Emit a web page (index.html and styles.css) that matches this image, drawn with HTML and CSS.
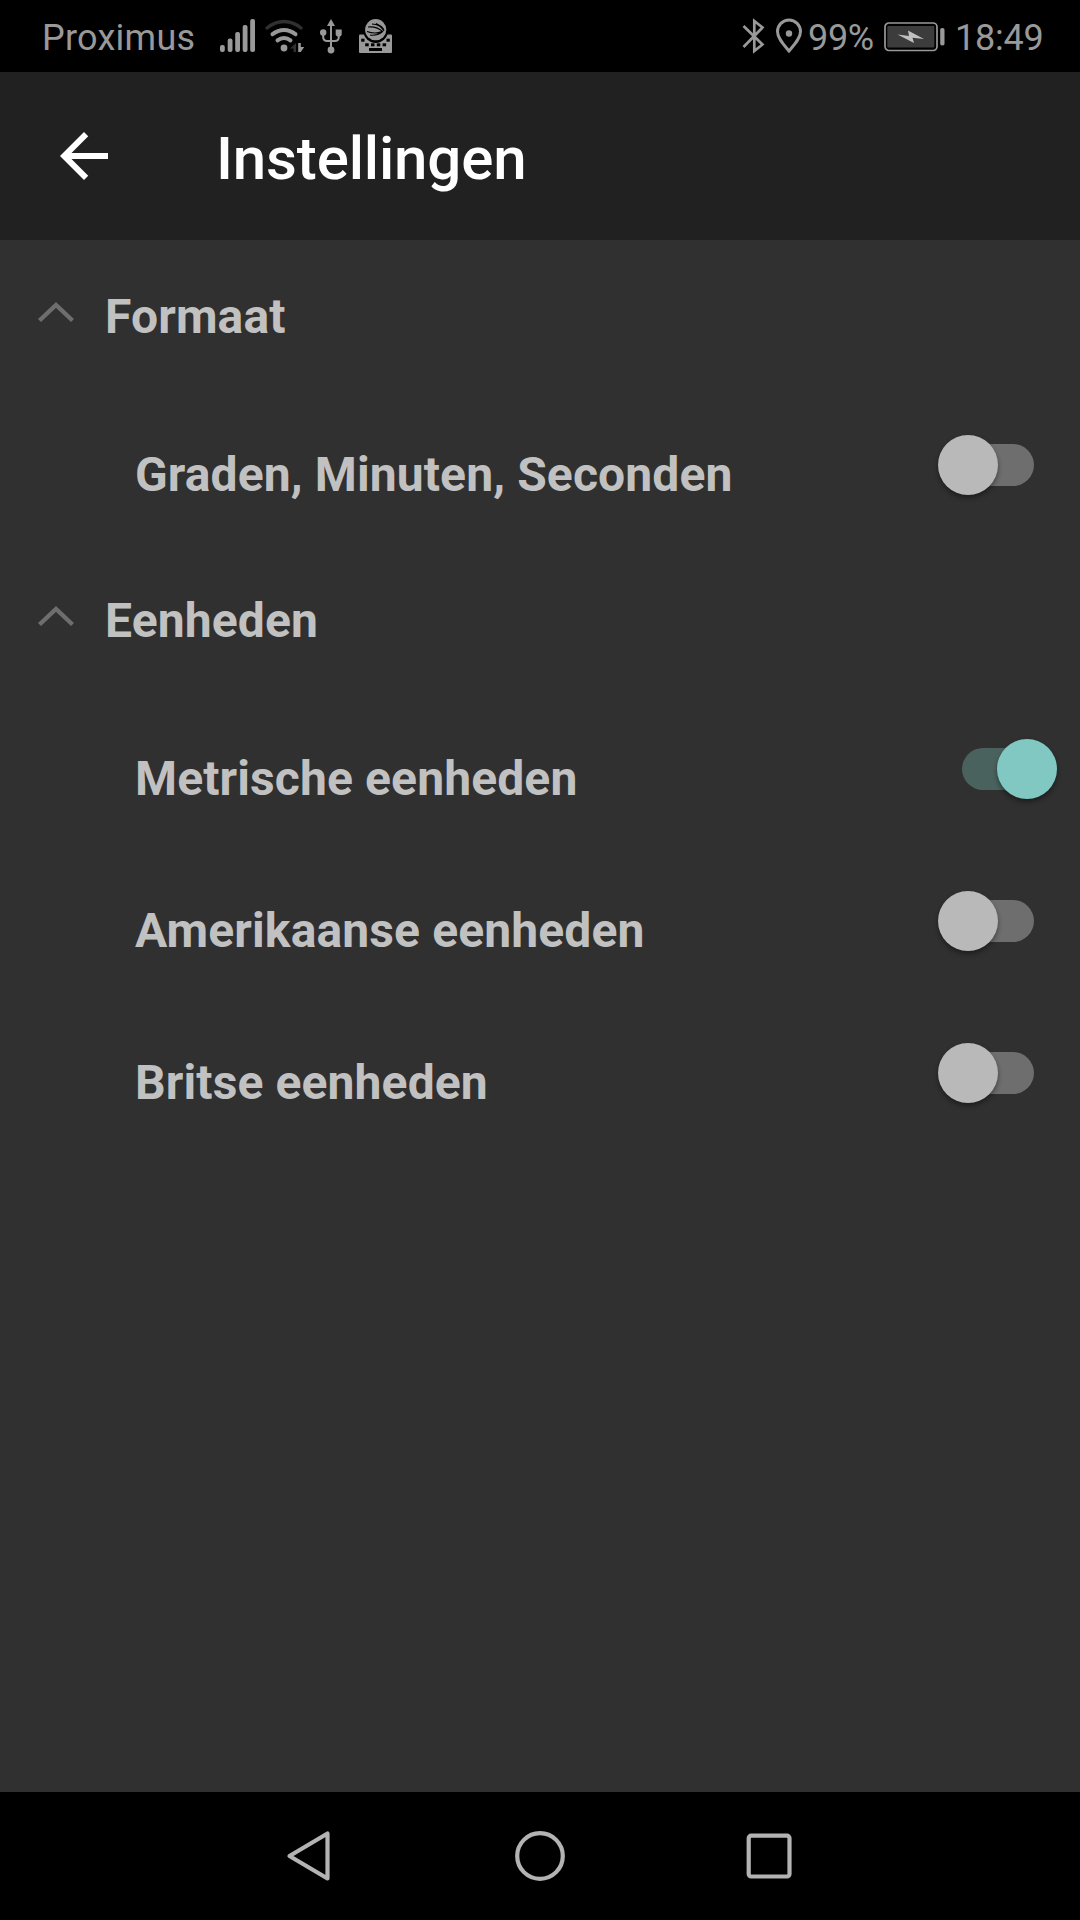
FILE: index.html
```html
<!DOCTYPE html>
<html lang="nl">
<head>
    <meta charset="UTF-8">
    <meta name="viewport" content="width=device-width, initial-scale=1.0">
    <title>Instellingen</title>
    <link rel="stylesheet" href="styles.css">
</head>
<body>
    <div class="screen">
        <!-- Status bar -->
        <div class="status-bar">
            <div class="status-left">
                <span class="carrier">Proximus</span>
                <svg class="icon-signal" width="36" height="36" viewBox="0 0 36 36" fill="currentColor">
                    <rect x="0" y="27" width="4.8" height="7" rx="2"/>
                    <rect x="7.7" y="20.5" width="4.8" height="13.5" rx="2"/>
                    <rect x="15.2" y="14" width="4.8" height="20" rx="2"/>
                    <rect x="22.7" y="7" width="4.8" height="27" rx="2"/>
                    <rect x="30.2" y="1" width="4.8" height="33" rx="2"/>
                </svg>
                <svg class="icon-wifi" width="42" height="36" viewBox="0 0 42 36" fill="none" stroke="currentColor" stroke-linecap="round">
                    <path d="M3 10Q11 3.5 20 3.5T37 10" stroke="#303030" stroke-width="3.4"/>
                    <path d="M8.5 16.2Q14 12 20 12T31.5 16.2" stroke-width="4"/>
                    <path d="M13.5 22.3Q16.5 20 20 20T26.5 22.3" stroke-width="4"/>
                    <circle cx="20" cy="30" r="3.4" fill="currentColor" stroke="none"/>
                    <path d="M26 30.5L32 25v9h-2.5v-3.5z" fill="#303030" stroke="none"/>
                    <path d="M34.2 25v9h2.6l3.4-5h-3.4v-4z" fill="currentColor" stroke="none"/>
                </svg>
                <svg class="icon-usb" width="24" height="36" viewBox="0 0 24 36" fill="none" stroke="currentColor" stroke-width="2">
                    <path d="M12 6v27M4.2 14v5q0 4 4 4h7.6q4 0 4-4v-5"/>
                    <path d="M12 1l4 7H8zM16.7 11.5h6V17l-1.5 1.5h-3L16.7 17z" fill="currentColor" stroke="none"/>
                    <circle cx="4.2" cy="14.5" r="3.2" fill="currentColor" stroke="none"/>
                    <circle cx="12" cy="32" r="3.4" fill="currentColor" stroke="none"/>
                </svg>
                <svg class="icon-keyboard" width="34" height="36" viewBox="0 0 34 36">
                    <rect x="0" y="16.5" width="33" height="18.5" rx="1" fill="currentColor"/>
                    <g fill="#000">
                        <circle cx="16.7" cy="12.5" r="12.4"/>
                        <rect x="2.2" y="20.7" width="3.3" height="3"/>
                        <rect x="27.5" y="20.7" width="3.3" height="3"/>
                        <rect x="6.2" y="25.3" width="3.5" height="3"/>
                        <rect x="12" y="25.3" width="3.5" height="3"/>
                        <rect x="17.8" y="25.3" width="3.5" height="3"/>
                        <rect x="23.6" y="25.3" width="3.5" height="3"/>
                        <rect x="10" y="30" width="13" height="3"/>
                    </g>
                    <circle cx="16.7" cy="11.7" r="10.6" fill="currentColor"/>
                    <path d="M13 6q8 0 12 7M17 5.5q5 2 8 6M9 9q9-1 15 5M8 13.5q8 3 15 0M11 17q7 1 12-3" fill="none" stroke="#000" stroke-width="1.1"/>
                </svg>
            </div>
            <div class="status-right">
                <svg class="icon-bluetooth" width="24" height="36" viewBox="0 0 24 36" fill="none" stroke="currentColor" stroke-width="2.7">
                    <path d="M1.5 8l19 18.5-8.2 6.5V3l8.2 6.5L1.5 29"/>
                </svg>
                <svg class="icon-location" width="28" height="36" viewBox="0 0 28 36" fill="none" stroke="currentColor" stroke-width="3">
                    <path d="M14 33C9 27 2.5 20.5 2.5 13.5a11.5 11.5 0 0 1 23 0C25.5 20.5 19 27 14 33z"/>
                    <circle cx="14" cy="15.5" r="3.2" fill="currentColor" stroke="none"/>
                </svg>
                <span class="battery-level">99%</span>
                <svg class="icon-battery" width="62" height="30" viewBox="0 0 62 30">
                    <rect x="1" y="1" width="52" height="27.5" rx="4" fill="none" stroke="currentColor" stroke-width="1.7"/>
                    <rect x="3.3" y="4" width="47" height="21.5" rx="1" fill="#3c3c3c"/>
                    <rect x="56.2" y="6" width="4.3" height="17.5" rx="1.8" fill="currentColor"/>
                    <path d="M13.5 12.5L25 14l-1-5.500L40 17l-11.500-1.300L30 21z" fill="#c0c0c0"/>
                </svg>
                <span class="clock">18:49</span>
            </div>
        </div>

        <!-- Title bar -->
        <header class="toolbar">
            <svg class="back" width="72" height="72" viewBox="0 0 24 24" fill="#fff">
                <path d="M20 11H7.83l5.59-5.59L12 4l-8 8 8 8 1.41-1.41L7.83 13H20v-2z"/>
            </svg>
            <h1 class="title">Instellingen</h1>
        </header>

        <main class="settings">
            <div class="group-header">
                <svg class="chevron" width="36" height="22" viewBox="0 0 36 22" fill="none" stroke="currentColor" stroke-width="4.4">
                    <path d="M1.5 19.5L18 4l16.5 15.5"/>
                </svg>
                <span>Formaat</span>
            </div>
            <div class="setting">
                <span>Graden, Minuten, Seconden</span>
                <div class="switch"></div>
            </div>

            <div class="group-header">
                <svg class="chevron" width="36" height="22" viewBox="0 0 36 22" fill="none" stroke="currentColor" stroke-width="4.4">
                    <path d="M1.5 19.5L18 4l16.5 15.5"/>
                </svg>
                <span>Eenheden</span>
            </div>
            <div class="setting">
                <span>Metrische eenheden</span>
                <div class="switch on"></div>
            </div>
            <div class="setting">
                <span>Amerikaanse eenheden</span>
                <div class="switch"></div>
            </div>
            <div class="setting">
                <span>Britse eenheden</span>
                <div class="switch"></div>
            </div>
        </main>

        <!-- Navigation buttons -->
        <nav class="nav-bar">
            <svg width="52" height="52" viewBox="0 0 52 52" fill="none" stroke="currentColor" stroke-width="4.2" stroke-linejoin="round">
                <path d="M42.5 3.5v45L4.500 26z"/>
            </svg>
            <svg width="52" height="52" viewBox="0 0 52 52" fill="none" stroke="currentColor" stroke-width="4.2">
                <circle cx="26" cy="26" r="22.8"/>
            </svg>
            <svg width="52" height="52" viewBox="0 0 52 52" fill="none" stroke="currentColor" stroke-width="4.2">
                <rect x="5.7" y="5.7" width="40.8" height="40.8" rx="2.5"/>
            </svg>
        </nav>
    </div>
</body>
</html>
```
FILE: styles.css
```css
* {
    margin: 0;
    padding: 0;
    box-sizing: border-box;
}

body {
    font-family: Roboto, sans-serif;
    background: #303030;
    overflow: hidden;
}

svg {
    display: block;
    flex: none;
}

.screen {
    width: 1080px;
    height: 1920px;
    display: flex;
    flex-direction: column;
}

/* Status bar */
.status-bar {
    height: 72px;
    padding: 0 37px 0 42px;
    background: #000;
    color: #999;
    font-size: 36px;
    line-height: 42px;
    display: flex;
    justify-content: space-between;
}

.status-left,
.status-right {
    display: flex;
    align-items: flex-start;
    padding-top: 18px;
}

.carrier,
.battery-level,
.clock {
    margin-top: -1px;
    white-space: nowrap;
}

.carrier {
    width: 178px;
    letter-spacing: 0.25px;
}

.icon-wifi {
    margin-left: 8px;
}

.icon-usb {
    margin-left: 12.5px;
}

.icon-keyboard {
    margin-left: 16.5px;
}

.icon-location {
    margin-left: 9px;
}

.battery-level {
    width: 81px;
    padding-left: 5px;
    letter-spacing: -0.3px;
}

.icon-battery {
    margin-top: 4px;
}

.clock {
    width: 97px;
    padding-left: 9px;
    letter-spacing: -0.2px;
}

/* Title bar */
.toolbar {
    height: 168px;
    padding: 48px 48px 0;
    background: #212121;
    display: flex;
}

.title {
    margin: 4px 0 0 96px;
    color: #fff;
    font-size: 60px;
    font-weight: 500;
    line-height: 70px;
    letter-spacing: -0.15px;
}

/* Settings list */
.settings {
    flex: 1;
    background: #303030;
    color: #c1c1c1;
    font-size: 48px;
    font-weight: 700;
    line-height: 56px;
    letter-spacing: 0.12px;
}

.group-header,
.setting {
    height: 152px;
    display: flex;
    align-items: flex-start;
}

.group-header {
    padding: 49px 0 0 38px;
}

.chevron {
    margin: 12px 31px 0 0;
    color: #6e6e6e;
}

.setting {
    padding: 55px 46px 0 135px;
    justify-content: space-between;
}

.switch {
    position: relative;
    width: 96px;
    height: 60px;
    margin-top: -12px;
    padding: 9px 0 9px 12px;
}

.switch::before {
    content: '';
    display: block;
    height: 42px;
    border-radius: 21px;
    background: #6e6e6e;
}

.switch::after {
    content: '';
    position: absolute;
    top: 0;
    left: 0;
    width: 60px;
    height: 60px;
    border-radius: 50%;
    background: #b9b9b9;
    box-shadow: 0 3px 5px rgba(0, 0, 0, 0.4);
}

.switch.on {
    margin-right: -24px;
    padding: 9px 12px 9px 0;
}

.switch.on::before {
    background: #4a625e;
}

.switch.on::after {
    left: auto;
    right: 1px;
    background: #80c8c1;
}

/* Navigation bar */
.nav-bar {
    height: 128px;
    background: #000;
    color: #b3b3b3;
    display: flex;
    align-items: center;
    justify-content: center;
    gap: 177px;
}
```
